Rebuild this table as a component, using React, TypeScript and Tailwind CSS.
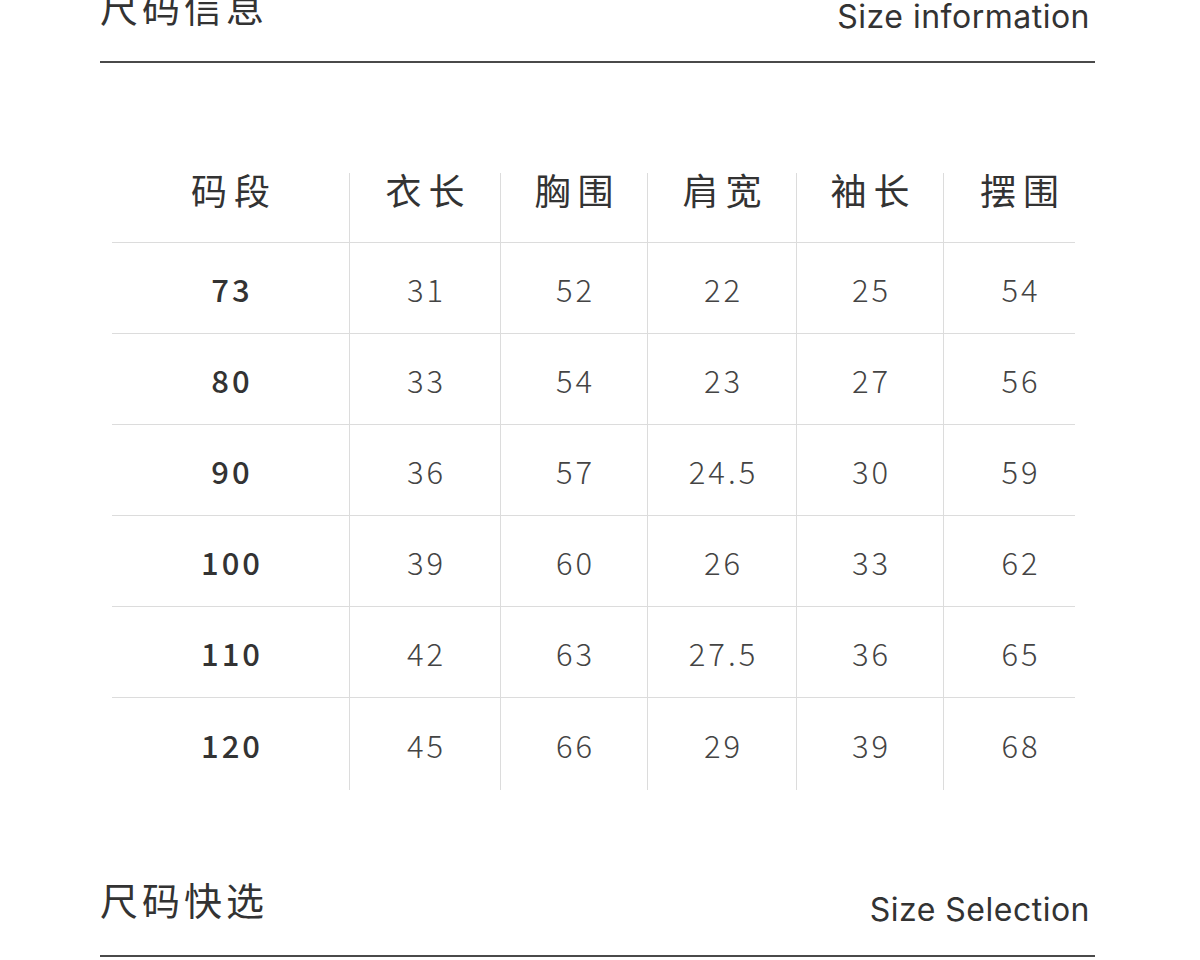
import React from "react";

const cols = ["码段", "衣长", "胸围", "肩宽", "袖长", "摆围"];
const rows = [
  ["73", "31", "52", "22", "25", "54"],
  ["80", "33", "54", "23", "27", "56"],
  ["90", "36", "57", "24.5", "30", "59"],
  ["100", "39", "60", "26", "33", "62"],
  ["110", "42", "63", "27.5", "36", "65"],
  ["120", "45", "66", "29", "39", "68"],
];

const font = { fontFamily: '"Noto Sans CJK SC", "Noto Sans", sans-serif' };

function Heading({ cn, en, top }: { cn: string; en: string; top?: boolean }) {
  return (
    <div className={`flex items-baseline justify-between border-b-2 border-[#4a4a4a] ${top ? "pb-[31px]" : "pb-[32px]"}`}>
      <div className="text-[38px] leading-[38px] tracking-[4px] text-[#333]">{cn}</div>
      <div
        className="relative top-[6px] text-[32px] leading-[38px] tracking-[0.5px] text-[#333] mr-[5px]"
        style={{ fontFamily: 'Inter, "Noto Sans", sans-serif' }}
      >
        {en}
      </div>
    </div>
  );
}

export default function App() {
  return (
    <div className="w-[1200px] h-[960px] overflow-hidden bg-white px-[100px] pr-[105px]" style={font}>
      <div className="mt-[-13px]">
        <Heading cn="尺码信息" en="Size information" top />
      </div>
      <div className="ml-[12px] w-[963px] mt-[110px]">
        <div className="grid grid-cols-[237px_151px_147px_149px_147px_132px] border-b border-[#dcdcdc] h-[70px]">
          {cols.map((c, i) => (
            <div
              key={c}
              className={`flex justify-center text-[36px] leading-[32px] tracking-[7px] pl-[7px] text-[#333] ${i > 0 ? "border-l border-[#dcdcdc]" : ""} ${i === 5 ? "pl-[27px]" : ""}`}
            >
              {c}
            </div>
          ))}
        </div>
        {rows.map((r, ri) => (
          <div
            key={ri}
            className={`grid grid-cols-[237px_151px_147px_149px_147px_132px] ${ri < 5 ? "h-[91px] border-b border-[#dcdcdc]" : "h-[92px]"}`}
          >
            {r.map((v, i) => (
              <div
                key={i}
                className={`flex items-center justify-center pt-[2px] text-[31px] tracking-[3px] pl-[3px] ${i === 0 ? "font-medium text-[#333]" : "font-light text-[#444]"} ${i > 0 ? "border-l border-[#dcdcdc]" : ""} ${i === 5 ? "pl-[23px]" : ""}`}
              >
                {v}
              </div>
            ))}
          </div>
        ))}
      </div>
      <div className="mt-[90px]">
        <Heading cn="尺码快选" en="Size Selection" />
      </div>
    </div>
  );
}
